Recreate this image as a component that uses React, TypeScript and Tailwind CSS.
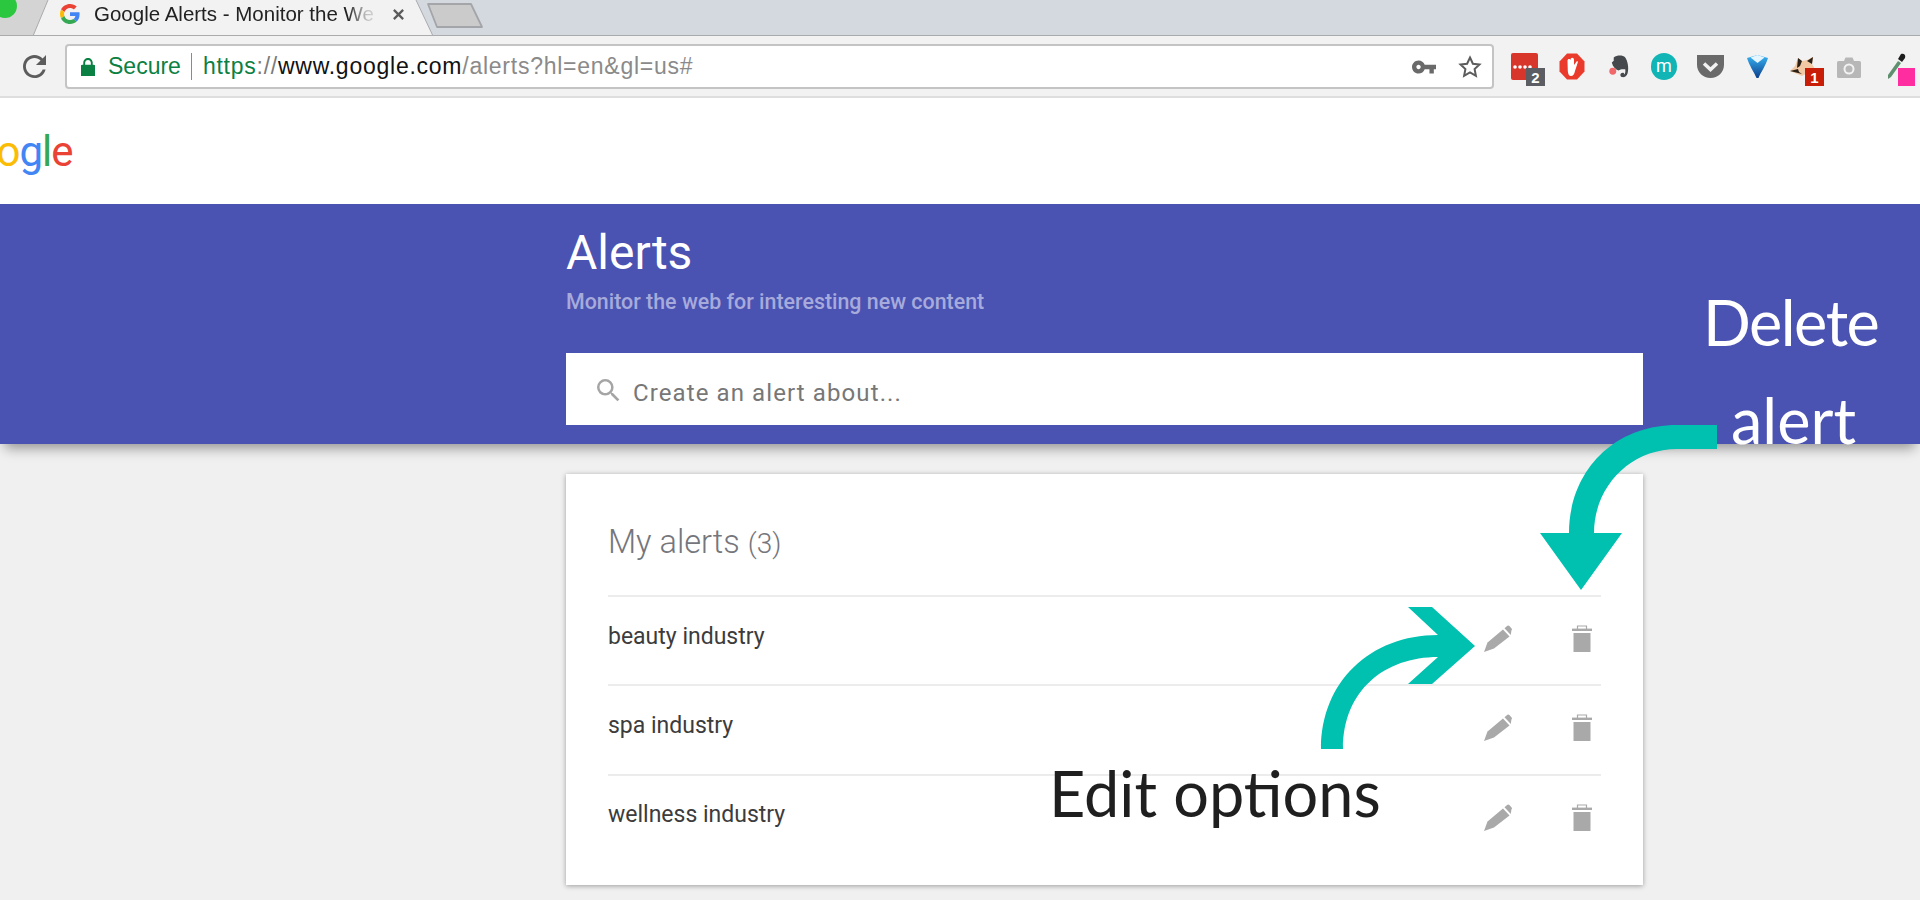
import React from "react";

const ROBOTO = "font-['Roboto',sans-serif]";
const LS = "font-['Liberation_Sans',sans-serif]";
const ANN = "font-['Lato',sans-serif]";

function Pencil() {
  return (
    <svg viewBox="0 0 28 27" className="w-[28px] h-[27px] fill-[#a9a9a9]">
      <path d="M0 27L3.5 17.5 19 4.5 25.5 11.5 10 23.5Z" />
      <path d="M20.5 3.2L23.4.8Q24.4 0 25.4 1L27.6 3.6Q28.4 4.6 27.4 5.6L26.8 10Z" />
    </svg>
  );
}

function Trash() {
  return (
    <svg viewBox="0 0 20 27" className="w-[20px] h-[27px] fill-[#a9a9a9]">
      <path d="M5.5 4V1h9v3" fill="none" stroke="#a9a9a9" strokeWidth="1.2" />
      <rect x="0" y="3.6" width="20" height="2.4" />
      <rect x="1.5" y="8" width="17" height="19" />
    </svg>
  );
}

function Row({ label }: { label: string }) {
  return (
    <div className="h-[89.3px] border-t-2 border-[#ececec] flex items-center pb-[4px]">
      <div className={`flex-1 text-[23px] text-[#3c3c3c] ${ROBOTO} pb-[3px]`}>{label}</div>
      <Pencil />
      <div className="w-[60px]" />
      <Trash />
      <div className="w-[9px]" />
    </div>
  );
}

function Badge({ text, cls }: { text: string; cls: string }) {
  return (
    <span className={`absolute top-[15px] w-[19px] h-[18px] flex items-center justify-center text-white text-[15px] font-bold leading-none ${LS} ${cls}`}>
      {text}
    </span>
  );
}

function Extensions() {
  return (
    <div className="flex items-center h-[27px]">
      <div className="relative ml-[17px] w-[27px] h-[27px] bg-[#d9362b] rounded-[2px] flex items-center pl-[2px]">
        <svg viewBox="0 0 27 27" className="absolute inset-0 w-[27px] h-[27px] fill-white">
          <circle cx="4" cy="14" r="1.8" />
          <circle cx="9" cy="14" r="1.8" />
          <circle cx="14" cy="14" r="1.8" />
          <circle cx="19" cy="14" r="1.8" />
        </svg>
        <Badge text="2" cls="left-[15px] bg-[#5b5d62]" />
      </div>
      <svg viewBox="0 0 26 27" className="ml-[21px] w-[26px] h-[27px]">
        <path d="M8 0.5h10l7.5 8v10l-7.5 8H8l-7.5-8v-10z" fill="#ea3a2c" />
        <path d="M8.5 8c0-2.5 2.5-2.5 3-1 0-3 3.5-3 3.5 0v5l3-4c1 0 1 1 .6 2L16 18c-.5 3-2 5-4 5s-3-2-3.2-5z" fill="#ffffff" />
      </svg>
      <svg viewBox="0 0 22 24" className="ml-[23px] w-[22px] h-[23px]">
        <path d="M5.5 6V2.5C9 0 15 0 17.5 2.5 20 6 21.5 13 20 19c-1 3.5-3.5 4.5-6 4-2.5-1-2-5 1.5-4.5 1 .2 1 1 .5 1.8 1.4-.2 2-3 1.5-5.5-2.5 0-5-.5-7 1.5-3-1-6-4-7-8.5z" fill="#45494d" />
        <circle cx="4.5" cy="17" r="3.6" fill="#f0686a" />
      </svg>
      <div className={`ml-[21px] w-[26px] h-[27px] rounded-full bg-[#12b5b5] text-white flex items-center justify-center text-[18px] leading-none pb-[2px] ${ROBOTO}`}>
        m
      </div>
      <svg viewBox="0 0 27 23" className="ml-[20px] w-[27px] h-[23px]">
        <path d="M0 0h27v10c0 7-6 13-13.5 13S0 17 0 10z" fill="#6a6a6a" />
        <path d="M7 8.5l6.5 6 6.5-6" stroke="#f2f2f2" strokeWidth="3.5" fill="none" />
      </svg>
      <svg viewBox="0 0 21 23" className="ml-[23px] w-[21px] h-[23px]">
        <defs>
          <linearGradient id="vg" x1="0" y1="0" x2="0" y2="1">
            <stop offset="0" stopColor="#38b6f5" />
            <stop offset="1" stopColor="#0b3f8c" />
          </linearGradient>
        </defs>
        <path d="M0 3L10.5 0 21 3C19 10 14 17 11.5 23H9.5C7 17 2 10 0 3z" fill="url(#vg)" />
        <path d="M3.5 2.5L10.5 0 17.5 2.5 10.5 8z" fill="#e6f6ff" />
      </svg>
      <div className="relative ml-[21px] w-[27px] h-[27px]">
        <svg viewBox="0 0 27 21" className="absolute left-0 top-[3px] w-[27px] h-[21px]">
          <path d="M9 2l4 3 5-1 6-3-1 7 3 5-6 3-7 4-12-5 5-5z" fill="#f1c9a5" />
          <path d="M9 2l4 3-2 5-3 2zM24 1l-1 7-5-3zM1 15l8-2 1 3 3 2z" fill="#2a2016" />
        </svg>
        <Badge text="1" cls="left-[16px] bg-[#c81d06]" />
      </div>
      <svg viewBox="0 0 24 21" className="ml-[21px] w-[24px] h-[21px] mt-[2px]">
        <path d="M1.5 4H7L8.5 0.5h7L17 4h5.5A1.5 1.5 0 0 1 24 5.5v14a1.5 1.5 0 0 1-1.5 1.5h-21A1.5 1.5 0 0 1 0 19.5v-14A1.5 1.5 0 0 1 1.5 4z" fill="#b7b7b7" />
        <circle cx="12" cy="12" r="5.5" fill="#f2f2f2" />
        <circle cx="12" cy="12" r="3.5" fill="#b7b7b7" />
      </svg>
      <div className="relative ml-[26px] w-[22px] h-[27px]">
        <svg viewBox="0 0 22 27" className="absolute inset-0 w-[22px] h-[27px]">
          <path d="M14 1c3-1 5 1 4 4l-3 4-4-3z" fill="#1e1e1e" />
          <path d="M11 8l3 2-10 14-3 2 0-4z" fill="#5e8f6e" />
        </svg>
        <span className="absolute left-[11px] top-[15px] w-[17px] h-[18px] bg-[#ff2d9f]" />
      </div>
    </div>
  );
}

export default function App() {
  return (
    <div className="relative w-[1920px] h-[900px] overflow-hidden bg-[#f0f0f0]">
      {/* Tab strip */}
      <div className="relative h-[36px] bg-[#d4d9e0] border-b border-[#a9abad] flex overflow-hidden">
        <svg viewBox="0 0 50 36" className="absolute left-0 top-0 w-[50px] h-[36px]">
          <path d="M0 0H48L33 36H0Z" fill="#d4d4d4" />
        </svg>
        <span className="absolute -left-[7px] -top-[6px] w-[24px] h-[24px] rounded-full bg-[#2bc83f]" />
        <div className="relative ml-[33px] w-[400px] h-[36px] pl-[27px]">
          <svg viewBox="0 0 400 36" className="absolute inset-0 w-[400px] h-[36px]">
            <path d="M0 36 L15 0 H383 L400 36Z" fill="#f2f2f2" />
            <path d="M0 36 L15 0 M383 0 L400 36" stroke="#a9abad" strokeWidth="1" fill="none" />
          </svg>
          <div className="relative flex items-center h-[28px]">
            <svg viewBox="0 0 48 48" className="w-[20px] h-[20px] shrink-0">
              <path fill="#EA4335" d="M24 9.5c3.5 0 6.7 1.2 9.2 3.6l6.9-6.9C35.9 2.4 30.5 0 24 0 14.6 0 6.5 5.4 2.6 13.2l8 6.2C12.4 13.7 17.7 9.5 24 9.5z" />
              <path fill="#4285F4" d="M46.98 24.55c0-1.57-.15-3.09-.38-4.55H24v9.02h12.94c-.58 2.96-2.26 5.48-4.78 7.18l7.73 6c4.51-4.18 7.09-10.36 7.09-17.65z" />
              <path fill="#FBBC05" d="M10.53 28.59c-.48-1.45-.76-2.99-.76-4.59s.27-3.14.76-4.59l-7.98-6.19C.92 16.46 0 20.12 0 24c0 3.88.92 7.54 2.56 10.78l7.97-6.19z" />
              <path fill="#34A853" d="M24 48c6.48 0 11.93-2.13 15.89-5.81l-7.73-6c-2.15 1.45-4.92 2.3-8.16 2.3-6.26 0-11.57-4.22-13.47-9.91l-7.98 6.19C6.51 42.62 14.62 48 24 48z" />
            </svg>
            <div className={`ml-[14px] w-[292px] whitespace-nowrap text-[20.5px] text-[#222] ${LS} [mask-image:linear-gradient(to_right,#000_87%,rgba(0,0,0,0.25)_93%,transparent_100%)]`}>
              Google Alerts - Monitor the We
            </div>
            <svg viewBox="0 0 14 14" className="ml-[6px] w-[13px] h-[13px]">
              <path d="M2 2l10 10M12 2L2 12" stroke="#5a5a5a" strokeWidth="2.4" />
            </svg>
          </div>
        </div>
        <svg viewBox="0 0 60 28" className="relative -ml-[7px] mt-[2px] w-[60px] h-[28px]">
          <path d="M2 2H45L56 25H11Z" fill="#cbcbcb" stroke="#a3a5a8" strokeWidth="1.8" strokeLinejoin="round" />
        </svg>
      </div>

      {/* Toolbar */}
      <div className="h-[62px] bg-[#f2f2f2] border-b-2 border-[#dedede] flex items-start pt-[8px]">
        <div className="w-[65px] h-[45px] flex items-center pl-[23px]">
          <svg viewBox="4 4 16 16" className="w-[23px] h-[23px] fill-[#5c5c5c]">
            <path d="M17.65 6.35C16.2 4.9 14.21 4 12 4c-4.42 0-7.99 3.58-7.99 8s3.57 8 7.99 8c3.73 0 6.84-2.55 7.73-6h-2.08c-.82 2.33-3.04 4-5.65 4-3.31 0-6-2.69-6-6s2.69-6 6-6c1.66 0 3.14.69 4.22 1.78L13 11h7V4l-2.35 2.35z" />
          </svg>
        </div>
        <div className={`w-[1429px] h-[45px] bg-white border-2 border-[#c4c4c4] rounded-[4px] flex items-center pl-[14px] pr-[10px] whitespace-nowrap ${LS}`}>
          <svg viewBox="5 1 14 19" className="w-[14px] h-[18px] fill-[#0b8043]">
            <path d="M18 8h-1V6c0-2.76-2.24-5-5-5S7 3.24 7 6v2H6c-1.1 0-2 .9-2 2v10c0 1.1.9 2 2 2h12c1.1 0 2-.9 2-2V10c0-1.1-.9-2-2-2zM9 6c0-1.66 1.34-3 3-3s3 1.34 3 3v2H9V6z" />
          </svg>
          <span className="ml-[13px] text-[#0b8043] text-[23px]">Secure</span>
          <span className="ml-[10px] mr-[11px] w-px h-[27px] bg-[#8a8a8a]" />
          <span className="text-[23px] tracking-[0.75px]">
            <span className="text-[#0b8043]">https</span>
            <span className="text-[#7a7a7a]">://</span>
            <span className="text-[#111]">www.google.com</span>
            <span className="text-[#8a8a8a]">/alerts?hl=en&amp;gl=us#</span>
          </span>
          <span className="flex-1" />
          <svg viewBox="1 6 22 12" className="w-[24px] h-[14px] fill-[#6a6a6a]">
            <path d="M12.65 10C11.83 7.67 9.61 6 7 6c-3.31 0-6 2.69-6 6s2.69 6 6 6c2.61 0 4.83-1.67 5.65-4H17v4h4v-4h2v-4H12.65zM7 14c-1.1 0-2-.9-2-2s.9-2 2-2 2 .9 2 2-.9 2-2 2z" />
          </svg>
          <svg viewBox="0 0 24 24" className="ml-[22px] w-[24px] h-[24px] fill-none stroke-[#5c5c5c] stroke-2">
            <path d="M12 2.5l2.9 6.2 6.6.8-4.9 4.6 1.3 6.7L12 17.5l-5.9 3.3 1.3-6.7-4.9-4.6 6.6-.8z" />
          </svg>
        </div>
        <div className="h-[45px] flex items-center">
          <Extensions />
        </div>
      </div>

      {/* Logo bar */}
      <div className="h-[106px] bg-white overflow-hidden">
        <div className={`-ml-[54px] pt-[30px] text-[42px] leading-[48px] tracking-[-1px] font-normal ${ROBOTO}`}>
          <span className="text-[#4285f4]">G</span>
          <span className="text-[#ea4335]">o</span>
          <span className="text-[#fbbc05]">o</span>
          <span className="text-[#4285f4]">g</span>
          <span className="text-[#34a853]">l</span>
          <span className="text-[#ea4335]">e</span>
        </div>
      </div>

      {/* Blue band */}
      <div className="relative h-[240px] bg-[#4a52b2] shadow-[0_9px_12px_-5px_rgba(0,0,0,0.4)] pl-[566px]">
        <div className={`pt-[21px] text-[48px] leading-[56px] font-normal text-white ${ROBOTO}`}>Alerts</div>
        <div className={`mt-[9px] text-[21.4px] leading-[24px] font-medium text-[#a7abdb] ${ROBOTO}`}>
          Monitor the web for interesting new content
        </div>
        <div className="mt-[39px] w-[1077px] h-[72px] bg-white flex items-center pl-[31px]">
          <svg viewBox="3 3 18 18" className="w-[23px] h-[23px] mt-[2px] fill-[#a5a5a5]">
            <path d="M15.5 14h-.79l-.28-.27A6.471 6.471 0 0 0 16 9.5 6.5 6.5 0 1 0 9.5 16c1.61 0 3.09-.59 4.23-1.57l.27.28v.79l5 4.99L20.49 19l-4.99-5zm-6 0C7.01 14 5 11.99 5 9.5S7.01 5 9.5 5 14 7.01 14 9.5 11.99 14 9.5 14z" />
          </svg>
          <span className={`ml-[13px] mt-[8px] text-[24px] tracking-[1.1px] text-[#777] ${ROBOTO}`}>Create an alert about...</span>
        </div>
      </div>

      {/* Card */}
      <div className="mt-[30px] ml-[566px] w-[1077px] h-[411px] bg-white shadow-[0_1px_5px_rgba(0,0,0,0.35)] px-[42px]">
        <div className={`h-[121px] pt-[46px] flex items-baseline font-light text-[#75767c] ${ROBOTO}`}>
          <span className="text-[32.5px] leading-[44px]">My alerts</span>
          <span className="ml-[8px] text-[28px] leading-[44px]">(3)</span>
        </div>
        <Row label="beauty industry" />
        <Row label="spa industry" />
        <Row label="wellness industry" />
      </div>

      {/* Annotations */}
      <svg viewBox="0 0 182 170" className="absolute left-[1540px] top-[425px] w-[182px] h-[170px] fill-[#00c0b0]">
        <path d="M177 0H137C72 0 29 48 29 108H0L41 165L82 108H54C54 62 90 24 137 24H177Z" />
      </svg>
      <svg viewBox="0 0 156 144" className="absolute left-[1320px] top-[606px] w-[156px] h-[144px] fill-[#00c0b0]">
        <path d="M1 143C1 76 50 29 118 29L88 1H112L155 40L112 78H88L118 51C65 51 23 84 23 143Z" />
      </svg>
      <div className={`absolute left-[1703px] top-[282px] text-[63px] leading-[80px] tracking-[-1.5px] text-white ${ANN}`}>Delete</div>
      <div className={`absolute left-[1731px] top-[380px] text-[63px] leading-[80px] text-white ${ANN}`}>alert</div>
      <div className={`absolute left-[1049px] top-[753px] text-[63px] leading-[80px] text-[#1f1f1f] ${ANN}`}>Edit options</div>
    </div>
  );
}
